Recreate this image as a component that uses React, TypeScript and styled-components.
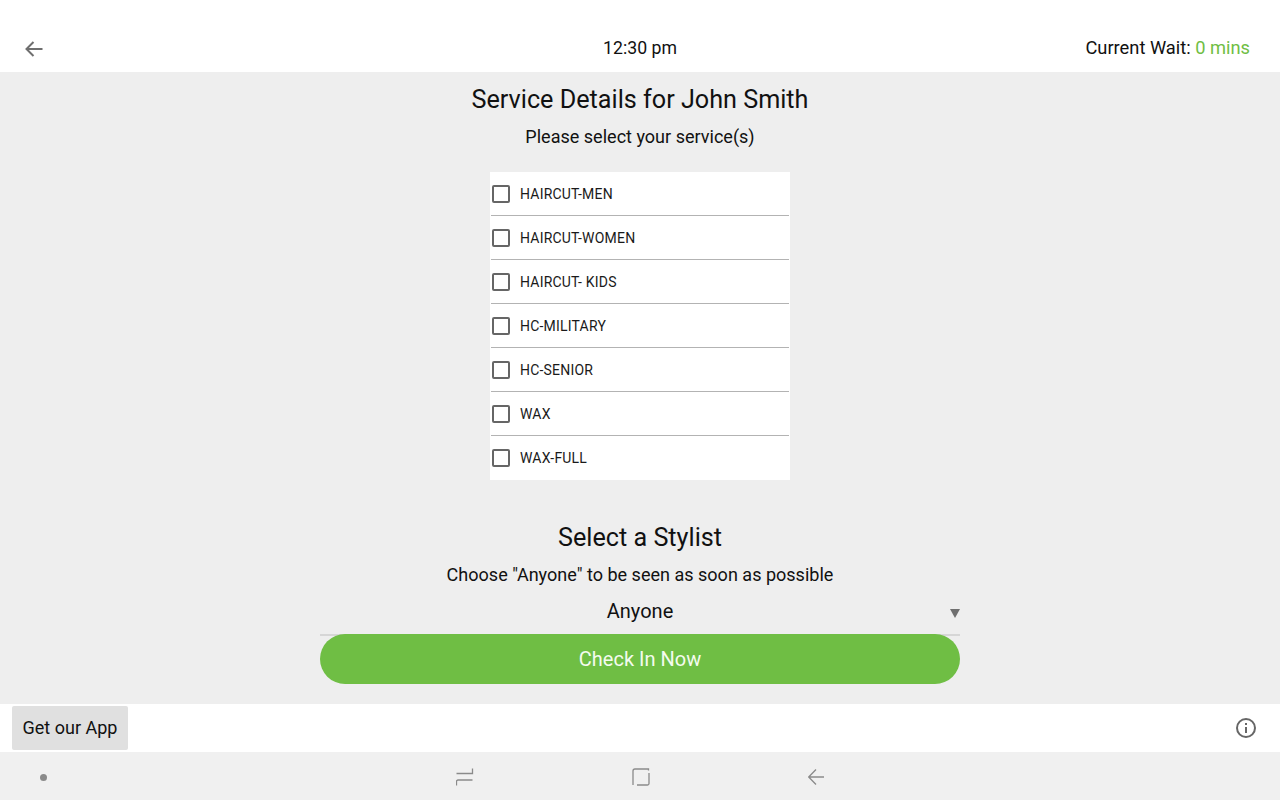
import React from "react";
import styled, { createGlobalStyle } from "styled-components";

const GlobalStyle = createGlobalStyle`
    html, body {
        margin: 0;
        padding: 0;
        background: #eeeeee;
    }
    * {
        box-sizing: border-box;
    }
`;

const services = [
    "HAIRCUT-MEN",
    "HAIRCUT-WOMEN",
    "HAIRCUT- KIDS",
    "HC-MILITARY",
    "HC-SENIOR",
    "WAX",
    "WAX-FULL",
];

const App = () => {
    return (
        <Page>
            <GlobalStyle />
            <TopBar>
                <BackButton>
                    <svg width="20" height="18" viewBox="0 0 20 18" fill="none" stroke="#6f6f6f" strokeWidth="2">
                        <path d="M18.5 9H2.5M9.5 2L2.5 9l7 7" />
                    </svg>
                </BackButton>
                <Clock>12:30 pm</Clock>
                <Wait>
                    Current Wait: <WaitValue>0 mins</WaitValue>
                </Wait>
            </TopBar>

            <Main>
                <Title>Service Details for John Smith</Title>
                <Subtitle>Please select your service(s)</Subtitle>
                <ServiceList>
                    {services.map((name) => (
                        <ServiceRow key={name}>
                            <Check />
                            <ServiceName>{name}</ServiceName>
                        </ServiceRow>
                    ))}
                </ServiceList>

                <StylistTitle>Select a Stylist</StylistTitle>
                <Subtitle>Choose "Anyone" to be seen as soon as possible</Subtitle>
                <Dropdown>
                    Anyone
                    <Caret />
                </Dropdown>
                <CheckInButton>Check In Now</CheckInButton>
            </Main>

            <Footer>
                <AppButton>Get our App</AppButton>
                <svg width="22" height="22" viewBox="0 0 22 22" fill="none" stroke="#666">
                    <circle cx="11" cy="11" r="9" strokeWidth="2" />
                    <path d="M11 10v6" strokeWidth="2" />
                    <path d="M11 6v2" strokeWidth="2" />
                </svg>
            </Footer>

            <NavBar>
                <NavDot />
                <NavIcons>
                    <svg width="18" height="18" viewBox="0 0 18 18" fill="none" stroke="#8a8a8a" strokeWidth="1.3">
                        <path d="M0.5 5.5H16.5V0.5M16.5 12H2a1.500 1.500 0 0 0-1.500 1.500V17.500" />
                    </svg>
                    <svg width="18" height="18" viewBox="0 0 18 18" fill="none" stroke="#8a8a8a" strokeWidth="1.3">
                        <path d="M16.5 2.500V1H3a2 2 0 0 0-2 2v14M5 17h10.500a1.500 1.500 0 0 0 1.500-1.500V5" />
                    </svg>
                    <svg width="18" height="18" viewBox="0 0 18 18" fill="none" stroke="#8a8a8a" strokeWidth="1.3">
                        <path d="M16 9H1M8 1.500L.7 9 8 16.500" />
                    </svg>
                </NavIcons>
            </NavBar>
        </Page>
    );
};

export default App;

const Page = styled.div`
    width: 1280px;
    height: 800px;
    overflow: hidden;
    display: flex;
    flex-direction: column;
    font-family: Roboto, "Liberation Sans", sans-serif;
    color: #111;
`;

const TopBar = styled.header`
    height: 72px;
    flex: none;
    padding: 37px 30px 0;
    background: #fff;
    display: grid;
    grid-template-columns: 1fr auto 1fr;
    align-items: start;
`;

const BackButton = styled.div`
    height: 22px;
    margin-left: -6px;
    display: flex;
    align-items: center;
    padding-top: 2px;
`;

const Clock = styled.div`
    font-size: 17.7px;
    line-height: 22px;
`;

const Wait = styled.div`
    font-size: 18.3px;
    line-height: 22px;
    text-align: right;
`;

const WaitValue = styled.span`
    color: #6fbe44;
`;

const Main = styled.main`
    flex: 1;
    display: flex;
    flex-direction: column;
    align-items: center;
    background: #eeeeee;
`;

const Title = styled.h1`
    margin: 12px 0 0;
    font-size: 25.2px;
    line-height: 32px;
    font-weight: 400;
`;

const Subtitle = styled.p`
    margin: 10px 0 0;
    font-size: 18.05px;
    line-height: 22px;
`;

const ServiceList = styled.div`
    width: 300px;
    margin-top: 24px;
    padding: 0 1px;
    background: #fff;
`;

const ServiceRow = styled.label`
    height: 44px;
    display: flex;
    align-items: center;
    gap: 10px;
    padding-left: 1px;
    border-bottom: 1px solid #b3b3b3;

    &:last-child {
        border-bottom: none;
    }
`;

const Check = styled.span`
    width: 18px;
    height: 18px;
    flex: none;
    border: 2px solid #666;
    border-radius: 2px;
`;

const ServiceName = styled.span`
    font-size: 14px;
    letter-spacing: 0.2px;
    color: #1a1a1a;
`;

const StylistTitle = styled.h2`
    margin: 42px 0 0;
    font-size: 25.2px;
    line-height: 32px;
    font-weight: 400;
`;

const Dropdown = styled.div`
    position: relative;
    width: 640px;
    height: 47px;
    margin-top: 3px;
    text-align: center;
    font-size: 20px;
    line-height: 44px;
    border-bottom: 2px solid #d6d6d6;
`;

const Caret = styled.span`
    position: absolute;
    right: 0;
    top: 20px;
    width: 0;
    height: 0;
    border-left: 5px solid transparent;
    border-right: 5px solid transparent;
    border-top: 9px solid #6f6f6f;
`;

const CheckInButton = styled.button`
    width: 640px;
    height: 50px;
    margin-top: -2px;
    position: relative;
    border: none;
    border-radius: 25px;
    background: #6fbe44;
    color: #f4fbef;
    font-family: inherit;
    font-size: 20px;
`;

const Footer = styled.footer`
    height: 48px;
    flex: none;
    padding: 0 23px 0 12px;
    background: #fff;
    display: flex;
    align-items: center;
    justify-content: space-between;
`;

const AppButton = styled.div`
    width: 116px;
    height: 44px;
    padding-bottom: 2px;
    background: #e0e0e0;
    border-radius: 2px;
    font-size: 18px;
    display: flex;
    align-items: center;
    justify-content: center;
`;

const NavBar = styled.nav`
    height: 48px;
    flex: none;
    position: relative;
    background: #f0f0f0;
    display: flex;
    align-items: center;
    padding: 2px 0 0 40px;
`;

const NavDot = styled.span`
    width: 7px;
    height: 7px;
    border-radius: 50%;
    background: #8a8a8a;
`;

const NavIcons = styled.div`
    display: flex;
    gap: 158px;
    margin-left: 409px;
`;
